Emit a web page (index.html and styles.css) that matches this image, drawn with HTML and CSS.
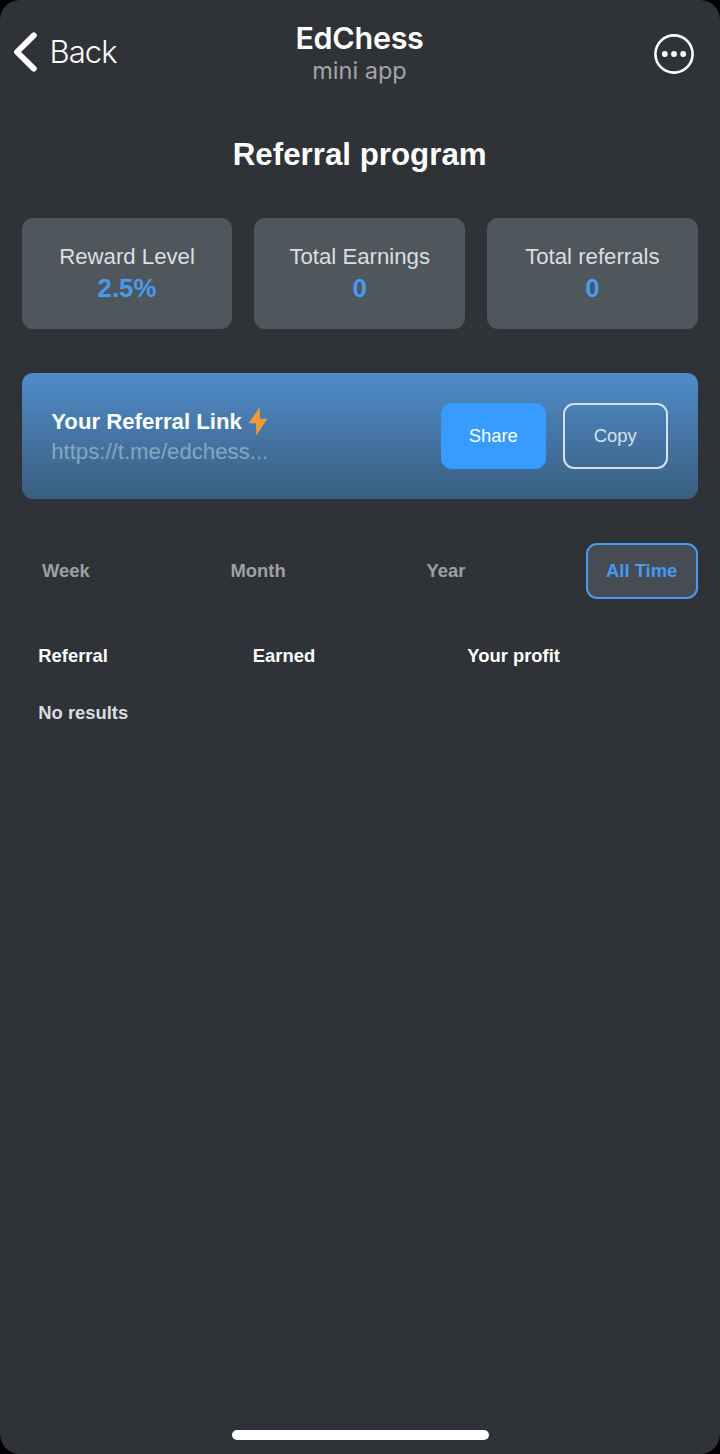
FILE: index.html
```html
<!DOCTYPE html>
<html lang="en">
<head>
<meta charset="utf-8">
<title>EdChess</title>
<link rel="stylesheet" href="styles.css">
</head>
<body>
<div class="screen">
  <header class="topbar">
    <div class="back">
      <svg class="chevron" width="24" height="40" viewBox="0 0 24 40"><path d="M20.8 3.4 4 20l16.8 16.6" fill="none" stroke="#fff" stroke-width="5.8" stroke-linecap="round" stroke-linejoin="round"/></svg>
      <span class="back-label">Back</span>
    </div>
    <div class="app">
      <div class="app-name">EdChess</div>
      <div class="app-kind">mini app</div>
    </div>
    <svg class="more" width="40" height="40" viewBox="0 0 40 40"><circle cx="20" cy="20" r="18.6" fill="none" stroke="#fff" stroke-width="2.6"/><circle cx="10.8" cy="20" r="2.9" fill="#fff"/><circle cx="20" cy="20" r="2.9" fill="#fff"/><circle cx="29.2" cy="20" r="2.9" fill="#fff"/></svg>
  </header>
  <main class="content">
    <h1 class="title">Referral program</h1>
    <section class="stats">
      <div class="stat"><span class="stat-label">Reward Level</span><span class="stat-value">2.5%</span></div>
      <div class="stat"><span class="stat-label">Total Earnings</span><span class="stat-value">0</span></div>
      <div class="stat"><span class="stat-label">Total referrals</span><span class="stat-value">0</span></div>
    </section>
    <section class="link-card">
      <div class="link-info">
        <div class="link-title">Your Referral Link<svg class="bolt" width="20" height="29" viewBox="0 0 20 29"><path d="M11.6.5.6 16.3h7.5L8.2 28.5 19.4 11.8H12z" fill="#f39a37"/></svg></div>
        <div class="link-url">https://t.me/edchess...</div>
      </div>
      <button class="btn share">Share</button>
      <button class="btn copy">Copy</button>
    </section>
    <nav class="tabs">
      <span class="tab">Week</span>
      <span class="tab">Month</span>
      <span class="tab">Year</span>
      <span class="tab active">All Time</span>
    </nav>
    <section class="table">
      <div class="row head"><span>Referral</span><span>Earned</span><span>Your profit</span></div>
      <div class="row empty">No results</div>
    </section>
  </main>
  <div class="home-bar"></div>
</div>
</body>
</html>
```
FILE: styles.css
```css
* { box-sizing: border-box; }
body { margin: 0; background: #000; font-family: "Liberation Sans", Arial, sans-serif; color: #fff; }
.screen { width: 720px; height: 1454px; background: #2f3236; border-radius: 20px; display: flex; flex-direction: column; overflow: hidden; }
.topbar { height: 108px; padding: 0 26px 0 13px; display: grid; grid-template-columns: 1fr auto 1fr; align-items: start; font-family: Inter, sans-serif; }
.back { display: flex; align-items: center; gap: 12.5px; padding-top: 32px; height: 72px; }
.chevron { flex: none; }
.back-label { font-size: 31px; line-height: 40px; letter-spacing: -0.9px; font-weight: 350; }
.app { text-align: center; padding: 19px 0 0 12px; }
.app-name { font-size: 30.5px; line-height: 37px; font-weight: 600; letter-spacing: -0.3px; }
.app-kind { font-size: 23.5px; line-height: 29px; color: #a3a5aa; }
.more { justify-self: end; margin-top: 34px; }
.content { padding: 0 22.3px 0 21.7px; flex: 1; }
.title { margin: 27px 0 0; height: 40px; line-height: 40px; font-size: 31.3px; font-weight: 700; text-align: center; }
.stats { margin-top: 43.4px; display: grid; grid-template-columns: repeat(3, 1fr); gap: 22px; }
.stat { height: 111px; border-radius: 11px; background: #4f565c; display: flex; flex-direction: column; align-items: center; padding-top: 22.6px; }
.stat-label { font-size: 22.2px; line-height: 32px; color: #dcdee1; }
.stat-value { font-size: 25.8px; line-height: 31px; font-weight: 700; color: #469bf0; }
.link-card { margin-top: 44px; height: 125.6px; border-radius: 11px; background: linear-gradient(#4f8cc9, #3a5e7f); padding: 0 30px 0 29.5px; display: flex; align-items: center; }
.link-info { flex: 1; padding-top: 1px; }
.link-title { display: flex; align-items: center; gap: 6px; height: 30px; font-size: 22.2px; font-weight: 700; line-height: 30px; }
.link-url { font-size: 22.2px; line-height: 30px; color: #89a5c0; }
.btn { width: 105px; height: 66px; border-radius: 11px; padding: 0; font: 18.4px/1 "Liberation Sans", Arial, sans-serif; border: 0; }
.share { background: #389bff; color: #fff; margin-right: 17px; }
.copy { background: transparent; color: #d8e2ed; border: 2px solid #d5e1ee; }
.tabs { margin-top: 44.4px; display: flex; justify-content: space-between; }
.tab { height: 55.6px; padding: 0 18.4px; border: 2px solid transparent; border-radius: 11px; line-height: 51px; font-size: 18.4px; font-weight: 700; color: #9da0a4; }
.active { color: #469bf0; border-color: #469bf0; background: #474b54; }
.table { margin-top: 28px; padding-left: 16.6px; font-size: 18.4px; font-weight: 700; }
.row { height: 57px; line-height: 57px; }
.head { display: grid; grid-template-columns: 214.5px 214.5px 1fr; }
.empty { color: #dadce0; }
.home-bar { width: 257px; height: 10px; border-radius: 5px; background: #fff; margin: 0 auto 14px; }
```
